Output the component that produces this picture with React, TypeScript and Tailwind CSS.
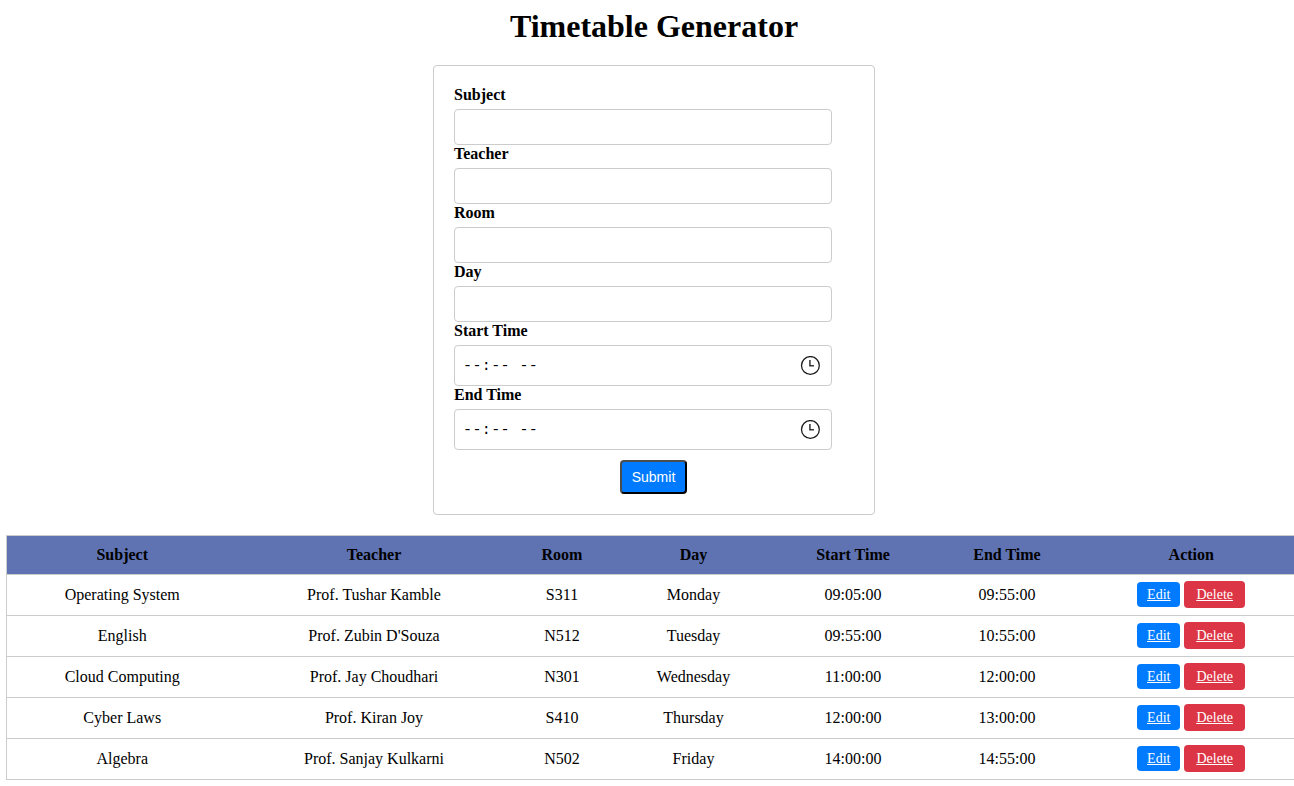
const textFields = ['Subject', 'Teacher', 'Room', 'Day'];
const timeFields = ['Start Time', 'End Time'];

const columns = [
  { label: 'Subject', width: 'w-[231px]' },
  { label: 'Teacher', width: 'w-[273px]' },
  { label: 'Room', width: 'w-[103px]' },
  { label: 'Day', width: 'w-[160px]' },
  { label: 'Start Time', width: 'w-[159px]' },
  { label: 'End Time', width: 'w-[149px]' },
  { label: 'Action', width: 'w-[220px]' },
];

const rows = [
  ['Operating System', 'Prof. Tushar Kamble', 'S311', 'Monday', '09:05:00', '09:55:00'],
  ['English', "Prof. Zubin D'Souza", 'N512', 'Tuesday', '09:55:00', '10:55:00'],
  ['Cloud Computing', 'Prof. Jay Choudhari', 'N301', 'Wednesday', '11:00:00', '12:00:00'],
  ['Cyber Laws', 'Prof. Kiran Joy', 'S410', 'Thursday', '12:00:00', '13:00:00'],
  ['Algebra', 'Prof. Sanjay Kulkarni', 'N502', 'Friday', '14:00:00', '14:55:00'],
];

function ClockIcon() {
  return (
    <svg className="h-5 w-5" viewBox="0 0 20 20" fill="none" stroke="#1c1c1c">
      <circle cx="10.4" cy="9.5" r="8.9" strokeWidth="1.3" />
      <path d="M9.9 4V9.8H13.9" stroke="#333" strokeWidth="1.5" />
    </svg>
  );
}

function TimeField({ label }: { label: string }) {
  return (
    <div>
      <label className="block h-[23px] text-[16px] leading-[18px] font-bold">{label}</label>
      <div className="flex h-[41px] items-center justify-between rounded-[4px] border border-[#ccc] pr-[11px] pl-[8px]">
        <span className="pt-[3px] font-['Liberation_Mono',monospace] text-[15px] leading-[18px] tracking-[0.4px] whitespace-pre">--:-- --</span>
        <ClockIcon />
      </div>
    </div>
  );
}

export default function App() {
  return (
    <div className="h-[786px] overflow-hidden bg-white pl-[6px] font-['Liberation_Serif',serif] text-[16px] text-black">
      <h1 className="w-[1296px] pt-[8px] text-center text-[32px] leading-[37px] font-bold">Timetable Generator</h1>

      <form className="mt-[20px] ml-[427px] h-[450px] w-[442px] rounded-[4px] border border-[#ccc] px-[20px] pt-[20px]">
        <div className="w-[378px]">
          {textFields.map((label) => (
            <div key={label}>
              <label className="block h-[23px] text-[16px] leading-[18px] font-bold">{label}</label>
              <input type="text" className="block h-[36px] w-full rounded-[4px] border border-[#ccc] px-[10px]" />
            </div>
          ))}
          {timeFields.map((label) => (
            <TimeField key={label} label={label} />
          ))}
        </div>
        <div className="flex justify-center pt-[10px] pr-[1px]">
          <button
            type="button"
            className="h-[34px] w-[67px] rounded-[4px] border-2 border-t-[#4d4d4d] border-r-black border-b-black border-l-[#4d4d4d] bg-[#007bff] font-['Liberation_Sans',sans-serif] text-[14px] leading-[16px] text-white"
          >
            Submit
          </button>
        </div>
      </form>

      <table className="mt-[20px] w-[1296px] table-fixed border-collapse border border-[#ccc] text-center">
        <thead>
          <tr className="h-[39px] border-b border-[#ccc] bg-[#5f73b3]">
            {columns.map((column) => (
              <th key={column.label} className={`${column.width} p-0 leading-[18px] font-bold`}>
                {column.label}
              </th>
            ))}
          </tr>
        </thead>
        <tbody>
          {rows.map((row) => (
            <tr key={row[0]} className="h-[41px] border-b border-[#ccc]">
              {row.map((value, index) => (
                <td key={index} className="p-0 leading-[18px]">
                  {value}
                </td>
              ))}
              <td className="p-0 pb-[2px]">
                <div className="flex items-center justify-center gap-[4px] text-[14px] leading-[17px] text-white underline">
                  <a href="#edit" className="flex h-[25px] w-[43px] items-center justify-center rounded-[4px] bg-[#007bff]">
                    Edit
                  </a>
                  <a href="#delete" className="flex h-[27px] w-[61px] items-center justify-center rounded-[4px] bg-[#dc3545]">
                    Delete
                  </a>
                </div>
              </td>
            </tr>
          ))}
        </tbody>
      </table>
    </div>
  );
}
